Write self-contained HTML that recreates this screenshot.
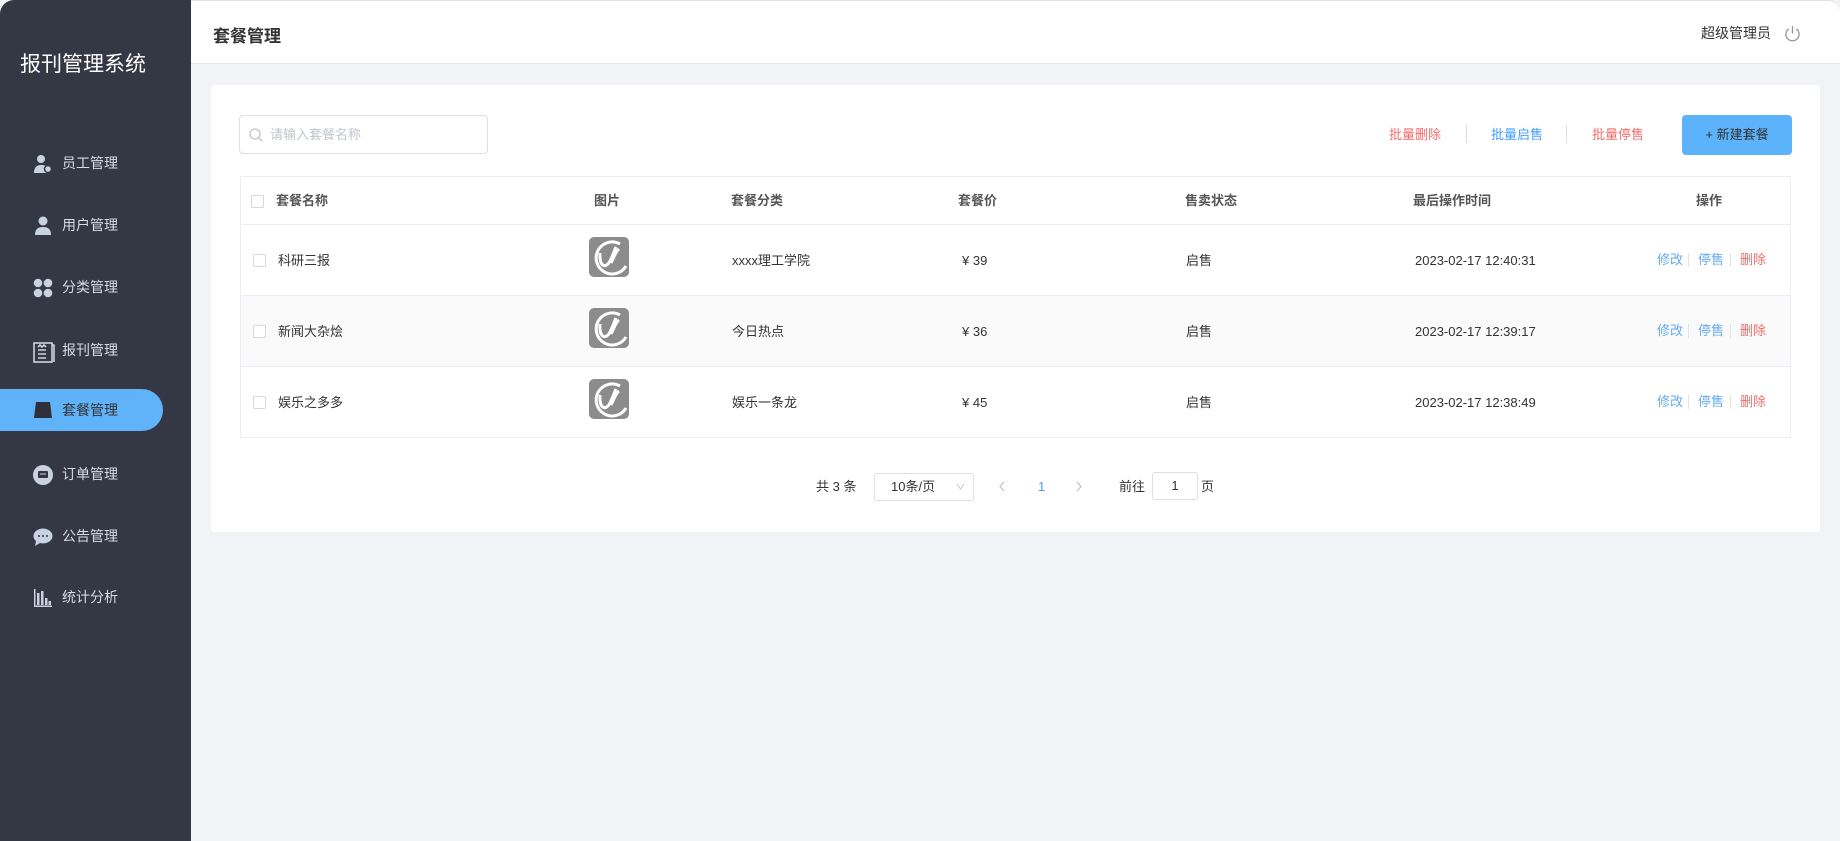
<!DOCTYPE html>
<html><head><meta charset="utf-8"><style>
*{box-sizing:border-box;margin:0;padding:0}
body{width:1840px;height:841px;background:#f2f3f6;font-family:"Liberation Sans","Noto Sans CJK SC",sans-serif;position:relative;overflow:hidden;color:#333}
.abs{position:absolute}
#side{left:0;top:0;width:191px;height:841px;background:#343744;border-top-left-radius:14px}
.logo{left:20px;top:48px;font-size:21px;color:#fff}
.mi{left:0;height:42px;width:163px;color:#d6dbe6;font-size:14px;line-height:42px}
.mi span{position:absolute;left:62px}
.mi svg{position:absolute;left:33px;top:12px}
.mi.act{background:#60b3f8;border-radius:0 21px 21px 0;color:#333}
#hdr{left:191px;top:0;width:1649px;height:64px;background:#fff;border-bottom:1px solid #e6e8ec;border-top:1px solid #dde2e8;border-top-right-radius:12px}
.card{left:211px;top:85px;width:1609px;height:447px;background:#fff;border-radius:4px}
.t{font-size:13px;color:#333;white-space:nowrap;line-height:18px;height:18px}
.th{font-size:13px;font-weight:bold;color:#555;line-height:18px}
.cb{width:13px;height:13px;border:1px solid #d6d9de;border-radius:2px;background:#fff}
.img{width:40px;height:40px;background:#8c8c8c;border-radius:5px}
.ac{position:absolute;font-size:13px;line-height:18px;white-space:nowrap}
.sep{position:absolute;width:1px;height:14px;background:#e4e4e4}
</style></head><body>
<div id="side" class="abs">
<div class="abs logo">报刊管理系统</div>
<div class="abs mi" style="top:142px"><svg width="20" height="20" viewBox="0 0 20 20"><circle cx="8" cy="5" r="4" fill="#c9d2e0"/><path d="M1 19c0-6 3-8 7-8s5 1 6 2v6z" fill="#c9d2e0"/><circle cx="15" cy="15" r="3.5" fill="#c9d2e0" stroke="#343744" stroke-width="1.5"/></svg><span>员工管理</span></div>
<div class="abs mi" style="top:204px"><svg width="20" height="20" viewBox="0 0 20 20"><circle cx="10" cy="5" r="4.5" fill="#c9d2e0"/><path d="M2 19c0-6 3-8 8-8s8 2 8 8z" fill="#c9d2e0"/></svg><span>用户管理</span></div>
<div class="abs mi" style="top:266px"><svg width="20" height="20" viewBox="0 0 20 20" fill="#c9d2e0"><circle cx="5" cy="5" r="4.3"/><circle cx="15" cy="5" r="4.3"/><circle cx="5" cy="15" r="4.3"/><circle cx="15" cy="15" r="4.3"/></svg><span>分类管理</span></div>
<div class="abs mi" style="top:329px"><svg width="22" height="22" viewBox="0 0 22 22" fill="none" stroke="#c9d2e0" stroke-width="1.6"><rect x="1" y="2" width="18" height="19"/><path d="M5 9h8M5 13h8M5 17h8M5 6l2-2 2 2 2-2 2 2"/><path d="M19 4h2v17"/></svg><span>报刊管理</span></div>
<div class="abs mi act" style="top:389px"><svg width="20" height="18" viewBox="0 0 20 18"><path d="M3 1h14l2 16H1z" fill="#2d3038"/></svg><span>套餐管理</span></div>
<div class="abs mi" style="top:453px"><svg width="20" height="20" viewBox="0 0 20 20"><circle cx="10" cy="10" r="10" fill="#c9d2e0"/><rect x="5" y="6" width="10" height="7" rx="1" fill="#343744"/><path d="M7 9h6" stroke="#c9d2e0"/></svg><span>订单管理</span></div>
<div class="abs mi" style="top:515px"><svg width="20" height="20" viewBox="0 0 20 20"><ellipse cx="10" cy="9" rx="9.5" ry="7.5" fill="#c9d2e0"/><path d="M3 14l-1 5 5-3z" fill="#c9d2e0"/><circle cx="6" cy="9" r="1" fill="#343744"/><circle cx="10" cy="9" r="1" fill="#343744"/><circle cx="14" cy="9" r="1" fill="#343744"/></svg><span>公告管理</span></div>
<div class="abs mi" style="top:576px"><svg width="20" height="20" viewBox="0 0 20 20" fill="#c9d2e0"><rect x="1" y="1" width="1.5" height="18"/><rect x="1" y="17.5" width="18" height="1.5"/><rect x="4" y="5" width="2.5" height="12"/><rect x="8" y="3" width="2.5" height="14"/><rect x="12" y="10" width="2.5" height="7"/><rect x="15.5" y="13" width="2.5" height="4"/></svg><span>统计分析</span></div>
</div>
<div id="hdr" class="abs">
<div class="abs" style="left:22px;top:21px;font-size:17px;font-weight:bold;color:#333">套餐管理</div>
<div class="abs t" style="left:1510px;top:23px;font-size:14px">超级管理员</div>
<svg class="abs" style="left:1593px;top:24px" width="17" height="17" viewBox="0 0 18 18" fill="none" stroke="#999" stroke-width="1.4"><path d="M5 4a7 7 0 1 0 8 0"/><path d="M9 1v8"/></svg>
</div>
<div class="abs card"></div>
<div class="abs" style="left:239px;top:115px;width:249px;height:39px;border:1px solid #dcdfe6;border-radius:4px;background:#fff"></div>
<svg class="abs" style="left:249px;top:128px" width="14" height="14" viewBox="0 0 14 14" fill="none" stroke="#c0c4cc" stroke-width="1.3"><circle cx="6" cy="6" r="5"/><path d="M10 10l3 3"/></svg>
<div class="abs t" style="left:270px;top:126px;color:#c0c4cc">请输入套餐名称</div>
<div class="abs t" style="left:1389px;top:126px;color:#f56c6c">批量删除</div>
<div class="abs" style="left:1466px;top:125px;width:1px;height:18px;background:#ddd"></div>
<div class="abs t" style="left:1491px;top:126px;color:#409eff">批量启售</div>
<div class="abs" style="left:1566px;top:125px;width:1px;height:18px;background:#ddd"></div>
<div class="abs t" style="left:1592px;top:126px;color:#f56c6c">批量停售</div>
<div class="abs t" style="left:1682px;top:115px;width:110px;height:40px;background:#5cb3fb;border-radius:4px;text-align:center;line-height:40px;color:#333">+ 新建套餐</div>
<div class="abs" style="left:240px;top:176px;width:1551px;height:262px;border:1px solid #ebeef5"></div>
<div class="abs" style="left:241px;top:295px;width:1549px;height:71px;background:#fafafa"></div>
<div class="abs" style="left:241px;top:224px;width:1549px;height:1px;background:#ebeef5"></div>
<div class="abs" style="left:241px;top:295px;width:1549px;height:1px;background:#ebeef5"></div>
<div class="abs" style="left:241px;top:366px;width:1549px;height:1px;background:#ebeef5"></div>
<div class="abs cb" style="left:251px;top:195px"></div>
<div class="abs th" style="left:276px;top:192px">套餐名称</div>
<div class="abs th" style="left:594px;top:192px">图片</div>
<div class="abs th" style="left:731px;top:192px">套餐分类</div>
<div class="abs th" style="left:958px;top:192px">套餐价</div>
<div class="abs th" style="left:1185px;top:192px">售卖状态</div>
<div class="abs th" style="left:1413px;top:192px">最后操作时间</div>
<div class="abs th" style="left:1696px;top:192px">操作</div>

<div class="abs cb" style="left:253px;top:254px"></div>
<div class="abs t" style="left:278px;top:252px">科研三报</div>
<div class="abs img" style="left:589px;top:237px"></div>
<div class="abs t" style="left:732px;top:252px">xxxx理工学院</div>
<div class="abs t" style="left:962px;top:252px">¥ 39</div>
<div class="abs t" style="left:1186px;top:252px">启售</div>
<div class="abs t" style="left:1415px;top:252px">2023-02-17 12:40:31</div>

<div class="abs cb" style="left:253px;top:325px"></div>
<div class="abs t" style="left:278px;top:323px">新闻大杂烩</div>
<div class="abs img" style="left:589px;top:308px"></div>
<div class="abs t" style="left:732px;top:323px">今日热点</div>
<div class="abs t" style="left:962px;top:323px">¥ 36</div>
<div class="abs t" style="left:1186px;top:323px">启售</div>
<div class="abs t" style="left:1415px;top:323px">2023-02-17 12:39:17</div>

<div class="abs cb" style="left:253px;top:396px"></div>
<div class="abs t" style="left:278px;top:394px">娱乐之多多</div>
<div class="abs img" style="left:589px;top:379px"></div>
<div class="abs t" style="left:732px;top:394px">娱乐一条龙</div>
<div class="abs t" style="left:962px;top:394px">¥ 45</div>
<div class="abs t" style="left:1186px;top:394px">启售</div>
<div class="abs t" style="left:1415px;top:394px">2023-02-17 12:38:49</div>

<div class="ac" style="left:1657px;top:251px;color:#66a9f5">修改</div><div class="sep" style="left:1688px;top:253px"></div><div class="ac" style="left:1698px;top:251px;color:#66a9f5">停售</div><div class="sep" style="left:1730px;top:253px"></div><div class="ac" style="left:1740px;top:251px;color:#f56c6c">删除</div>
<div class="ac" style="left:1657px;top:322px;color:#66a9f5">修改</div><div class="sep" style="left:1688px;top:324px"></div><div class="ac" style="left:1698px;top:322px;color:#66a9f5">停售</div><div class="sep" style="left:1730px;top:324px"></div><div class="ac" style="left:1740px;top:322px;color:#f56c6c">删除</div>
<div class="ac" style="left:1657px;top:393px;color:#66a9f5">修改</div><div class="sep" style="left:1688px;top:395px"></div><div class="ac" style="left:1698px;top:393px;color:#66a9f5">停售</div><div class="sep" style="left:1730px;top:395px"></div><div class="ac" style="left:1740px;top:393px;color:#f56c6c">删除</div>

<svg class="abs" style="left:589px;top:237px" width="40" height="182" viewBox="0 0 40 182" fill="none" stroke="#fff" stroke-width="3">
<g><path d="M31 7a16 16 0 1 0 6 22"/><path d="M11 16c-1 14 6 16 10 8s4-10 6-14"/><path d="M22 26c3-6 5-12 8-14"/></g>
<g transform="translate(0,71)"><path d="M31 7a16 16 0 1 0 6 22"/><path d="M11 16c-1 14 6 16 10 8s4-10 6-14"/><path d="M22 26c3-6 5-12 8-14"/></g>
<g transform="translate(0,142)"><path d="M31 7a16 16 0 1 0 6 22"/><path d="M11 16c-1 14 6 16 10 8s4-10 6-14"/><path d="M22 26c3-6 5-12 8-14"/></g>
</svg>

<div class="abs t" style="left:816px;top:478px">共 3 条</div>
<div class="abs" style="left:874px;top:473px;width:100px;height:28px;border:1px solid #dcdfe6;border-radius:3px"></div>
<div class="abs t" style="left:891px;top:478px">10条/页</div>
<svg class="abs" style="left:956px;top:483px" width="9" height="8" viewBox="0 0 9 8" fill="none" stroke="#c0c4cc"><path d="M1 1l3.5 5L8 1"/></svg>
<svg class="abs" style="left:998px;top:481px" width="8" height="11" viewBox="0 0 8 11" fill="none" stroke="#c0c4cc" stroke-width="1.3"><path d="M6 1L2 5.5 6 10"/></svg>
<div class="abs t" style="left:1038px;top:478px;color:#409eff">1</div>
<svg class="abs" style="left:1075px;top:481px" width="8" height="11" viewBox="0 0 8 11" fill="none" stroke="#c0c4cc" stroke-width="1.3"><path d="M2 1l4 4.5L2 10"/></svg>
<div class="abs t" style="left:1119px;top:478px">前往</div>
<div class="abs" style="left:1152px;top:472px;width:46px;height:28px;border:1px solid #dcdfe6;border-radius:3px;text-align:center;line-height:26px;font-size:13px">1</div>
<div class="abs t" style="left:1201px;top:478px">页</div>
</body></html>
